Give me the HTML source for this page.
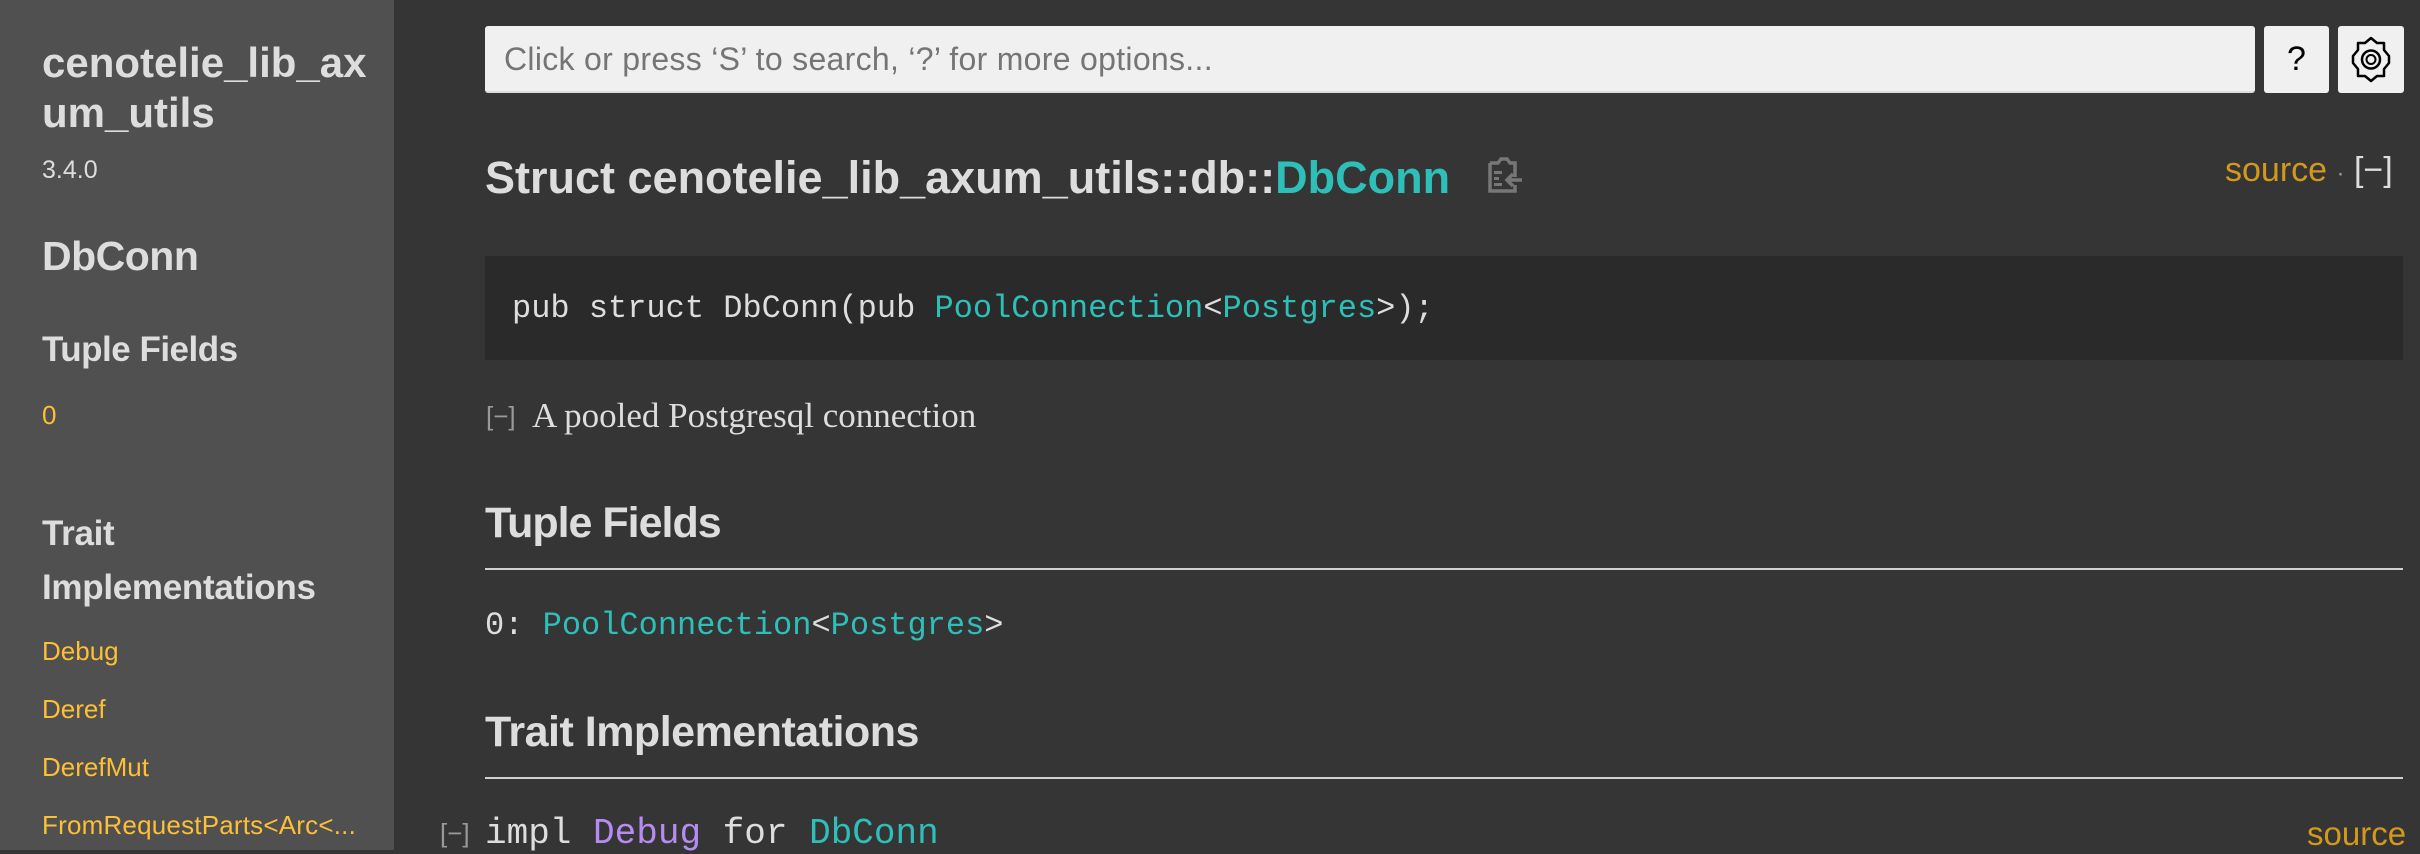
<!DOCTYPE html>
<html><head><meta charset="utf-8"><style>
*{margin:0;padding:0;box-sizing:border-box}
body{width:2420px;height:850px;overflow:hidden;background:#353535;font-family:"Liberation Sans",sans-serif;color:#ddd;position:relative}
.sb{position:absolute;left:0;top:0;width:394px;height:850px;background:#505050}
.a{position:absolute;white-space:nowrap}
.y{color:#fdbf35}
.t{color:#2dbfb8}
.p{color:#b78cf2}
.m{font-family:"Liberation Mono",monospace}
.h{font-weight:bold;color:#ddd}
.line{position:absolute;left:485px;width:1918px;height:2px;background:#d0d0d0}
</style></head><body>
<div class="sb"></div>
<div class="a h" style="left:42px;top:38px;font-size:42px;line-height:50px">cenotelie_lib_ax<br>um_utils</div>
<div class="a" style="left:42px;top:156px;font-size:25px;color:#ddd">3.4.0</div>
<div class="a h" style="left:42px;top:233px;font-size:41px;letter-spacing:-0.5px">DbConn</div>
<div class="a h" style="left:42px;top:330px;font-size:35px;letter-spacing:-0.5px">Tuple Fields</div>
<div class="a y" style="left:42px;top:400px;font-size:26px">0</div>
<div class="a h" style="left:42px;top:507px;font-size:35px;line-height:54px;letter-spacing:-0.3px">Trait<br>Implementations</div>
<div class="a y" style="left:42px;top:636px;font-size:26px">Debug</div>
<div class="a y" style="left:42px;top:694px;font-size:26px">Deref</div>
<div class="a y" style="left:42px;top:752px;font-size:26px">DerefMut</div>
<div class="a y" style="left:42px;top:810px;font-size:26px;letter-spacing:0.2px">FromRequestParts&lt;Arc&lt;...</div>

<div class="a" style="left:485px;top:26px;width:1770px;height:67px;background:#f0f0f0;border-radius:3px;border-bottom:2px solid #ddd"></div>
<div class="a" style="left:504px;top:41px;font-size:32px;color:#757575;letter-spacing:0.3px">Click or press ‘S’ to search, ‘?’ for more options...</div>
<div class="a" style="left:2264px;top:26px;width:65px;height:67px;background:#f0f0f0;border-radius:3px;color:#000;font-size:34px;text-align:center;line-height:67px">?</div>
<div class="a" style="left:2338px;top:26px;width:66px;height:67px;background:#f0f0f0;border-radius:3px">
<svg width="66" height="67" viewBox="0 0 66 67"><path d="M33 12 l6 5 h7 v7 l5 6 v7 l-5 6 v7 h-7 l-6 5 l-6 -5 h-7 v-7 l-5 -6 v-7 l5 -6 v-7 h7 z" fill="none" stroke="#000" stroke-width="2.5" stroke-linejoin="round"/><circle cx="33" cy="33.5" r="9" fill="none" stroke="#000" stroke-width="2.5"/><circle cx="33" cy="33.5" r="4.5" fill="none" stroke="#000" stroke-width="2"/></svg></div>

<div class="a h" style="left:485px;top:152px;font-size:45px;letter-spacing:0px">Struct cenotelie_lib_axum_utils::db::<span class="t">DbConn</span></div>
<svg class="a" style="left:1486px;top:157px" width="38" height="38" viewBox="0 0 38 38"><path d="M4 6 h8 l3-4 h6 l3 4 h5 v14 M4 6 v28 h25 v-6" fill="none" stroke="#777" stroke-width="3.5"/><rect x="8" y="14" width="8" height="3" fill="#777"/><rect x="8" y="20" width="5" height="3" fill="#777"/><rect x="8" y="26" width="8" height="3" fill="#777"/><path d="M36 23 h-14 M27 17 l-6 6 l6 6" fill="none" stroke="#777" stroke-width="3.5"/></svg>
<div class="a" style="left:2225px;top:151px;font-size:34px;color:#d2991d">source <span style="color:#999;font-size:24px">·</span> <span style="color:#ddd">[−]</span></div>

<div class="a" style="left:485px;top:256px;width:1918px;height:104px;background:#2a2a2a"></div>
<div class="a m" style="left:512px;top:290px;font-size:32px;color:#ddd">pub struct DbConn(pub <span class="t">PoolConnection</span>&lt;<span class="t">Postgres</span>&gt;);</div>

<div class="a" style="left:486px;top:401px;font-size:26px;color:#999">[−]</div>
<div class="a" style="left:532px;top:396px;font-size:35px;font-family:'Liberation Serif',serif;color:#ddd">A pooled Postgresql connection</div>

<div class="a h" style="left:485px;top:499px;font-size:43px;letter-spacing:-1px">Tuple Fields</div>
<div class="line" style="top:568px"></div>
<div class="a m" style="left:485px;top:607px;font-size:32px;color:#ddd">0: <span class="t">PoolConnection</span>&lt;<span class="t">Postgres</span>&gt;</div>

<div class="a h" style="left:485px;top:708px;font-size:43px;letter-spacing:-0.5px">Trait Implementations</div>
<div class="line" style="top:777px"></div>
<div class="a" style="left:440px;top:818px;font-size:26px;color:#999">[−]</div>
<div class="a m" style="left:485px;top:813px;font-size:36px;color:#ddd">impl <span class="p">Debug</span> for <span class="t">DbConn</span></div>
<div class="a" style="left:2307px;top:815px;font-size:33px;color:#d2991d">source</div>
</body></html>
